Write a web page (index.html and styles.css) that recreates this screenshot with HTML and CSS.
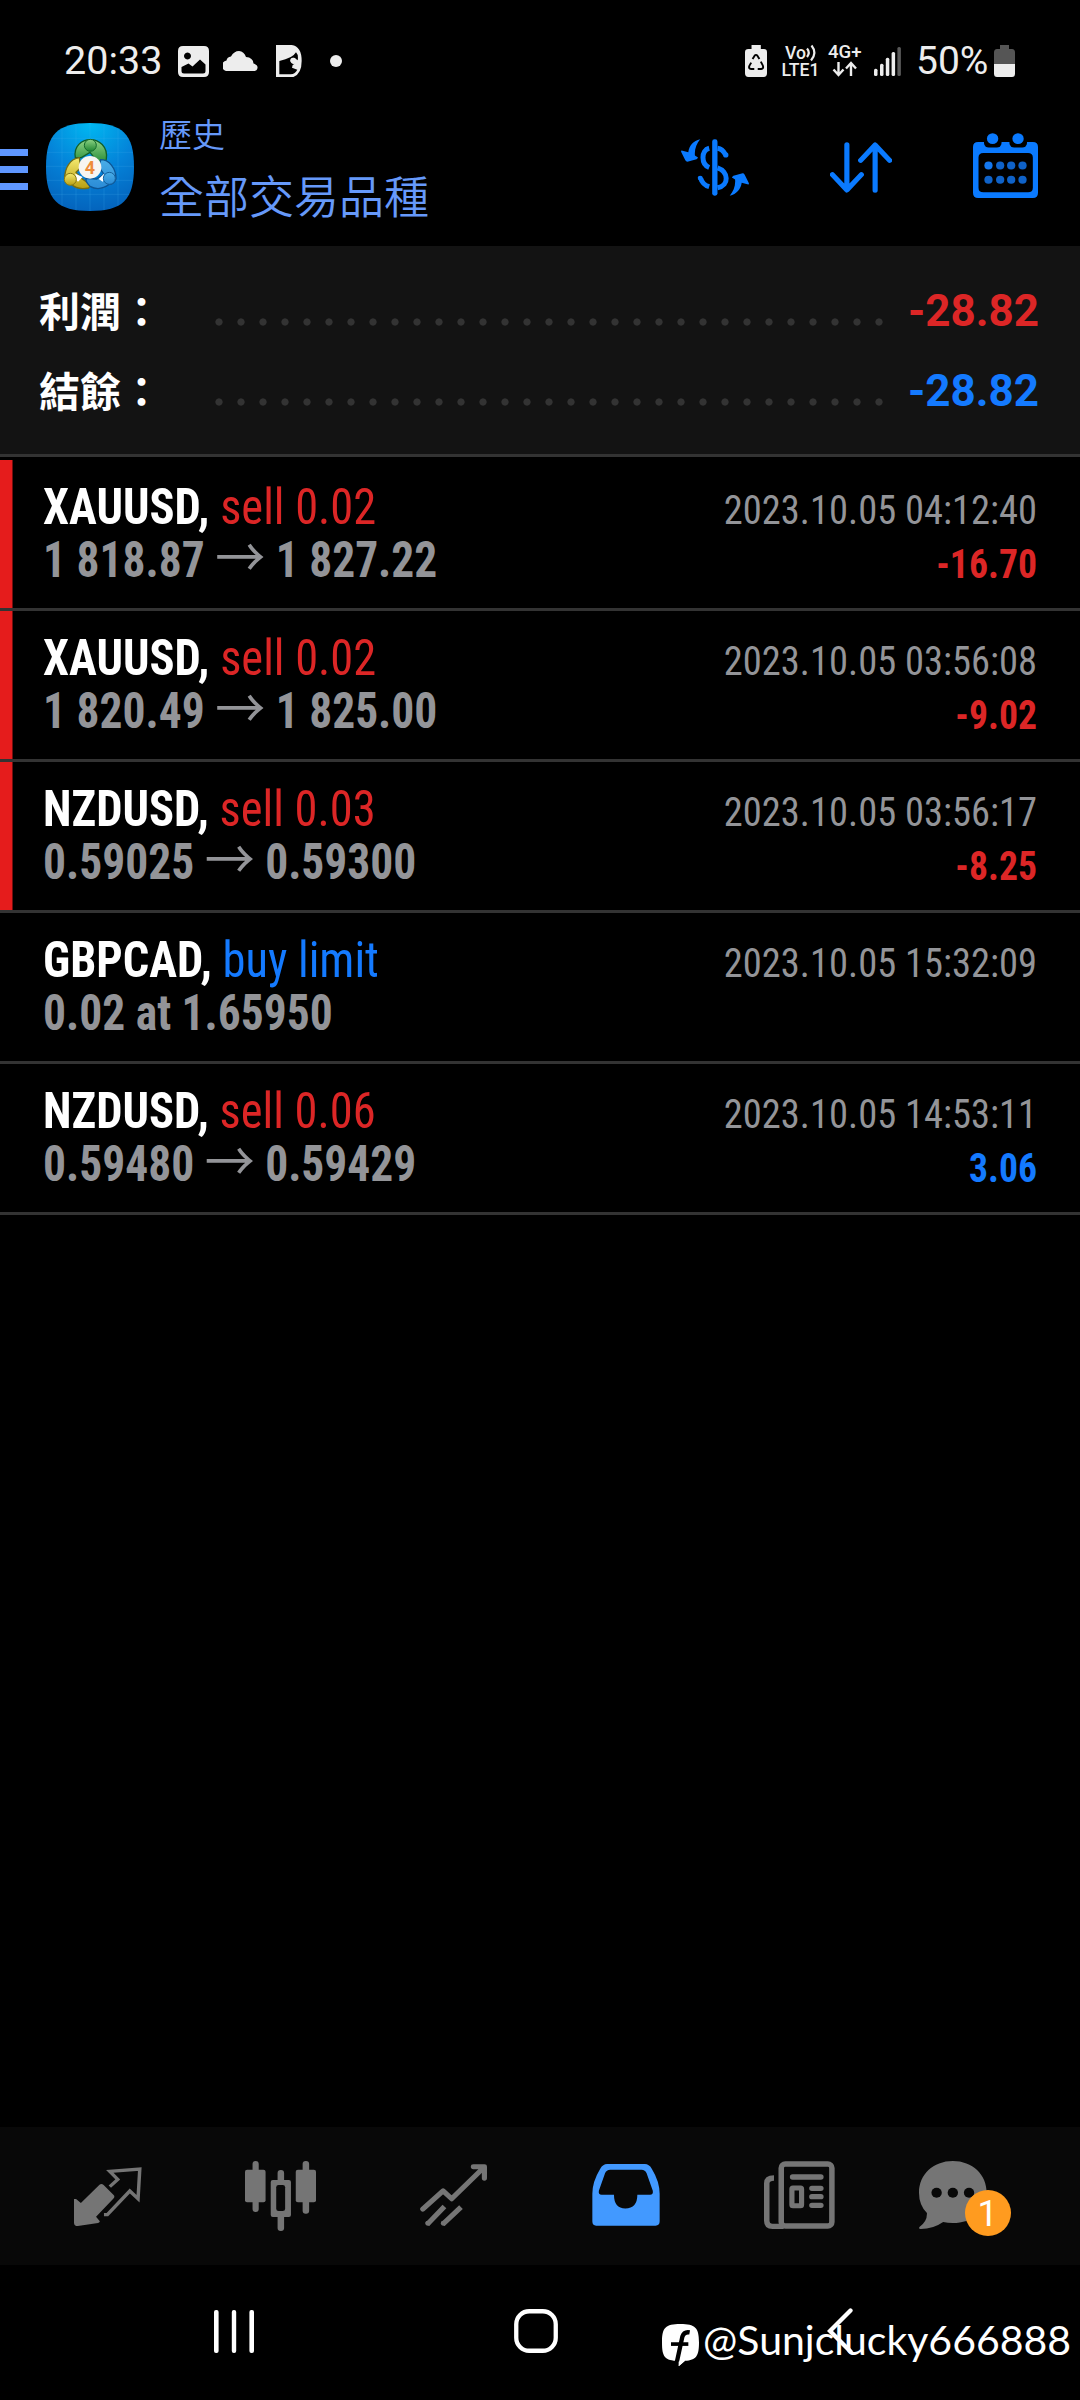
FILE: index.html
```html
<!DOCTYPE html>
<html lang="zh-Hant">
<head>
<meta charset="utf-8">
<title>歷史</title>
<link rel="stylesheet" href="styles.css">
</head>
<body>
<div class="screen">
  <div class="status">
    <span class="clock">20:33</span>
    <svg class="st-photo" viewBox="0 0 31 31"><path fill="#ededed" fill-rule="evenodd" d="M5 0H26Q31 0 31 5V26Q31 31 26 31H5Q0 31 0 26V5Q0 0 5 0ZM9.500 6.500a3.500 3.500 0 1 0 .01 0ZM3.500 21V25Q3.500 27.500 6 27.500H25Q27.500 27.500 27.500 25V18.500L22 13.500L14.500 20.500L10.500 17.500Z"/></svg>
    <svg class="st-cloud" viewBox="0 0 35 20"><path fill="#ededed" d="M5 20A5 5 0 0 1 3.500 9.500Q4 6 8 5.500Q11 0 16 0Q21 .5 23 6Q30 6.500 30.500 12.500Q35 14 34.500 17Q34 20 30.500 20Z"/></svg>
    <svg class="st-d" viewBox="48 30 78 98"><path fill="#ededed" fill-rule="evenodd" d="M48 30H95Q125 34 125 78Q125 122 93 128H48ZM58 78V118H92Q106 116 112 104L96 98L98 90L104 86A9 9 0 1 1 108 72L113 76Q116 60 108 52Q98 70 58 78Z"/><circle cx="99" cy="76" r="8" fill="#ededed"/></svg>
    <span class="st-dot"></span>
    <svg class="st-recycle" viewBox="595 75 64 96" preserveAspectRatio="none"><path fill="#ededed" d="M614 75H641V87H650Q659 87 659 97V160Q659 171 649 171H605Q595 171 595 160V97Q595 87 605 87H614Z"/><path fill="none" stroke="#000" stroke-width="5.500" stroke-linejoin="round" d="M617 117L623 107Q627 102 631 107L637 117M641 125L647 137Q650 146 642 147H632M622 147H613Q604 146 608 137L613 128"/></svg>
    <svg class="st-net" viewBox="782 44 80 36">
      <g fill="#ededed" font-family="Roboto, sans-serif" font-weight="500">
        <text x="785" y="59.500" font-size="18" textLength="21" lengthAdjust="spacingAndGlyphs">Vo</text>
        <text x="781.500" y="76.500" font-size="17.500" textLength="38" lengthAdjust="spacingAndGlyphs">LTE1</text>
        <text x="828" y="59" font-size="18" textLength="33.500" lengthAdjust="spacingAndGlyphs">4G+</text>
      </g>
      <path fill="none" stroke="#ededed" stroke-width="2.200" d="M807 49.500Q810.500 53.500 807 58M811.500 46.500Q817.500 54 811 61.500"/>
      <path fill="none" stroke="#ededed" stroke-width="2.400" d="M838.500 63V75.500M833.500 70.500L838.500 76L843.500 70.500M851 77V64.500M846 69.500L851 64L856 69.500"/>
    </svg>
    <svg class="st-signal" viewBox="874 46 27 29"><g fill="#ededed"><rect x="874" y="67.700" width="3.500" height="7.300" rx="1.500"/><rect x="880" y="62.700" width="3.500" height="12.300" rx="1.500"/><rect x="885.800" y="56.700" width="3.500" height="18.300" rx="1.500"/><rect x="891.600" y="51" width="3.500" height="24" rx="1.500"/><rect x="897.400" y="46" width="3.500" height="29" rx="1.500" fill="#595959"/></g></svg>
    <span class="pct">50%</span>
    <svg class="st-batt" viewBox="0 0 21 32"><path fill="#555" d="M6 0H15V4H18Q21 4 21 7.500V19H0V7.500Q0 4 3 4H6Z"/><path fill="#ededed" d="M0 19H21V28.500Q21 32 18 32H3Q0 32 0 28.500Z"/></svg>
  </div>

  <div class="header">
    <div class="menu"><i></i><i></i><i></i></div>
    <svg class="app" viewBox="48 38 264 264">
      <defs>
        <radialGradient id="bg" cx=".5" cy="0" r="1"><stop offset="0" stop-color="#00b9f2"/><stop offset=".55" stop-color="#0482d8"/><stop offset="1" stop-color="#0464bd"/></radialGradient>
        <linearGradient id="gr" x1="0" y1="0" x2="0" y2="1"><stop offset="0" stop-color="#8fd486"/><stop offset="1" stop-color="#1d8530"/></linearGradient>
        <linearGradient id="ye" x1="0" y1="0" x2="0" y2="1"><stop offset="0" stop-color="#f4ea70"/><stop offset="1" stop-color="#b89f12"/></linearGradient>
        <linearGradient id="bl" x1="0" y1="0" x2="0" y2="1"><stop offset="0" stop-color="#4aaee8"/><stop offset="1" stop-color="#2a8bd6"/></linearGradient>
      </defs>
      <path fill="url(#bg)" d="M180 38C278 38 312 72 312 170S278 302 180 302S48 268 48 170S82 38 180 38Z"/>
      <path stroke="#4cb4ee" stroke-opacity=".3" stroke-width="2" d="M96 56V286M138 42V300M180 39V301M222 42V300M264 56V286M64 84H296M52 126H308M49 168H311M51 210H308M62 252H298"/>
      <path fill="url(#gr)" stroke="#12602a" stroke-width="4" d="M136 142C130 108 155 88 181 88S234 108 229 146Q226 163 210 164L180 126L154 142Z"/>
      <path fill="url(#ye)" stroke="#746c14" stroke-width="4" d="M148 142C120 146 104 172 104 205Q110 222 124 222Q142 240 176 233L182 224L154 204L138 186L152 172Z"/>
      <path fill="url(#bl)" stroke="#0d5594" stroke-width="4" d="M212 148C238 148 258 174 258 205Q252 222 238 222Q208 244 180 228Q166 214 168 204L200 206L222 192L208 172Z"/>
      <path fill="#fff" d="M136 190L158 200L144 214L136 206ZM222 190L206 206L218 214L226 204Z"/>
      <circle cx="181" cy="105" r="18" fill="url(#gr)" stroke="#146a2c" stroke-width="3"/>
      <circle cx="121" cy="207" r="18" fill="url(#ye)" stroke="#857914" stroke-width="3"/>
      <circle cx="238" cy="204" r="18" fill="url(#bl)" stroke="#14609e" stroke-width="3"/>
      <circle cx="180" cy="171" r="34" fill="#f7f5f2"/>
      <text x="180" y="190" text-anchor="middle" font-family="Roboto, sans-serif" font-weight="700" font-size="54" fill="#ee8c3a">4</text>
    </svg>
    <div class="titles"><div class="sub">歷史</div><div class="title">全部交易品種</div></div>
    <svg class="ic-dollar" viewBox="33 41 205 170">
      <path id="turn" fill="#0a7aff" d="M91 41C70 46 58 60 55 80L35 75Q32 76 34 80L46 104Q49 110 55 108L80 101Q87 96 82 94L75 90C73 72 80 54 91 41Z"/>
      <use href="#turn" transform="rotate(180 135.500 126)"/>
      <rect x="127" y="41" width="16" height="170" rx="7" fill="#0a7aff"/>
      <path fill="none" stroke="#0a7aff" stroke-width="15" d="M118 68C93 74 93 116 118 126M143 127C176 138 180 180 143 187M143 68Q158 70 167 87M92 158Q98 178 118 184"/>
      <circle cx="168" cy="88" r="8" fill="#0a7aff"/><circle cx="91" cy="158" r="7.500" fill="#0a7aff"/>
    </svg>
    <svg class="ic-sort" viewBox="842 365 180 153" preserveAspectRatio="none"><path fill="none" stroke="#0a7aff" stroke-width="15" stroke-linecap="round" stroke-linejoin="round" d="M891 373V508M849 463L891 509L933 463M973 510V375M931 420L973 374L1015 420"/></svg>
    <svg class="ic-cal" viewBox="1257 339 189 196" preserveAspectRatio="none">
      <path fill="#0a7aff" fill-rule="evenodd" d="M1272 366H1431Q1446 366 1446 381V519Q1446 535 1431 535H1272Q1257 535 1257 519V381Q1257 366 1272 366ZM1287 399Q1273 399 1273 413V504Q1273 518 1287 518H1417Q1431 518 1431 504V413Q1431 399 1417 399Z"/>
      <rect x="1289" y="350" width="51" height="33" rx="14"/><rect x="1363" y="350" width="51" height="33" rx="14"/>
      <circle cx="1314" cy="356" r="16.500" fill="#0a7aff"/><circle cx="1388" cy="356" r="16.500" fill="#0a7aff"/>
      <g fill="#0f62c8"><circle cx="1302" cy="437" r="12" fill="#1478f0"/><circle cx="1336" cy="437" r="12"/><circle cx="1368" cy="437" r="12"/><circle cx="1401" cy="437" r="12"/><circle cx="1302" cy="480" r="12"/><circle cx="1336" cy="480" r="12"/><circle cx="1368" cy="480" r="12"/><circle cx="1401" cy="480" r="12"/></g>
    </svg>
  </div>

  <div class="summary">
    <div class="sum-row"><span class="label">利潤：</span><span class="leader"></span><span class="value red">-28.82</span></div>
    <div class="sum-row"><span class="label">結餘：</span><span class="leader"></span><span class="value blue">-28.82</span></div>
  </div>

  <div class="list">
    <div class="row loss"><div class="left"><div class="l1"><b>XAUUSD,</b> <span class="red">sell 0.02</span></div><div class="l2">1 818.87 <span class="arrow">→</span> 1 827.22</div></div><div class="right"><div class="time">2023.10.05 04:12:40</div><div class="profit red">-16.70</div></div></div>
    <div class="row loss"><div class="left"><div class="l1"><b>XAUUSD,</b> <span class="red">sell 0.02</span></div><div class="l2">1 820.49 <span class="arrow">→</span> 1 825.00</div></div><div class="right"><div class="time">2023.10.05 03:56:08</div><div class="profit red">-9.02</div></div></div>
    <div class="row loss"><div class="left"><div class="l1"><b>NZDUSD,</b> <span class="red">sell 0.03</span></div><div class="l2">0.59025 <span class="arrow">→</span> 0.59300</div></div><div class="right"><div class="time">2023.10.05 03:56:17</div><div class="profit red">-8.25</div></div></div>
    <div class="row"><div class="left"><div class="l1"><b>GBPCAD,</b> <span class="blue">buy limit</span></div><div class="l2">0.02 at 1.65950</div></div><div class="right"><div class="time">2023.10.05 15:32:09</div></div></div>
    <div class="row"><div class="left"><div class="l1"><b>NZDUSD,</b> <span class="red">sell 0.06</span></div><div class="l2">0.59480 <span class="arrow">→</span> 0.59429</div></div><div class="right"><div class="time">2023.10.05 14:53:11</div><div class="profit blue">3.06</div></div></div>
  </div>

  <div class="tabs">
    <div class="tab"><svg class="t1" viewBox="217 141 196 177" preserveAspectRatio="none"><path fill="none" stroke="#757575" stroke-width="10" d="M321 200L344 178L321 154L408 147L403 236L379 213L314 284H304"/><path fill="#757575" d="M291 194Q297 189 303 195L332 225Q337 230 331 236L281 290L292 304Q292 308 287 309L228 318Q217 318 217 308V237H223L237 249Z"/></svg></div>
    <div class="tab"><svg class="t2" viewBox="712 123 207 210" preserveAspectRatio="none"><g fill="#757575"><rect x="734" y="123" width="18" height="153" rx="9"/><rect x="712" y="149" width="60" height="98" rx="6"/><rect x="880" y="123" width="19" height="158" rx="9"/><rect x="860" y="149" width="59" height="98" rx="6"/><rect x="807" y="150" width="19" height="183" rx="9"/><rect x="787" y="180" width="59" height="111" rx="6"/></g><rect x="803" y="195" width="26" height="78" rx="7" fill="#080808"/></svg></div>
    <div class="tab"><svg class="t3" viewBox="1221 132 196 187" preserveAspectRatio="none"><g fill="none" stroke="#757575" stroke-width="15"><path stroke-linecap="round" stroke-linejoin="round" d="M1229 268L1288 213L1313 237L1404 145M1376 140H1408V175"/><path d="M1242 314L1292 260M1287 314L1340 262"/></g><circle cx="1244" cy="311" r="7.500" fill="#757575"/><circle cx="1289" cy="311" r="7.500" fill="#757575"/></svg></div>
    <div class="tab"><svg class="t4" viewBox="156 132 198 187" preserveAspectRatio="none"><path fill="#4299ff" fill-rule="evenodd" d="M200 132H310Q322 132 330 146Q353 185 353 222V305Q353 318 341 318H168Q157 318 157 305V222Q157 185 180 146Q188 132 200 132ZM209 149Q198 149 194 160L176 213Q174 225 184 225H220Q220 266 253 266Q288 266 288 225H325Q335 225 333 213L315 160Q311 149 300 149Z"/></svg></div>
    <div class="tab"><svg class="t5" viewBox="655 123 206 204" preserveAspectRatio="none"><g fill="none" stroke="#757575"><rect x="705" y="132" width="147" height="186" rx="12" stroke-width="16"/><path stroke-width="16" d="M684 174Q663 174 663 190V302Q663 319 680 319H712"/><rect x="736" y="204" width="28" height="53" rx="3" stroke-width="15"/><path stroke-width="16" stroke-linecap="round" d="M738 171H820M794 205H820M794 230H820M794 256H820"/></g></svg></div>
    <div class="tab"><div class="chat"><svg class="t6" viewBox="1107 123 197 204" preserveAspectRatio="none"><path fill="#757575" d="M1205 123C1262 123 1303 164 1303 218S1262 309 1205 309Q1190 309 1177 306Q1148 327 1112 327Q1104 326 1109 320Q1131 304 1130 279Q1107 255 1107 218C1107 164 1148 123 1205 123Z"/><g fill="#080808"><circle cx="1158" cy="218" r="15"/><circle cx="1205" cy="218" r="15"/><circle cx="1252" cy="218" r="15"/></g></svg><span class="badge">1</span></div></div>
  </div>

  <div class="nav">
    <svg class="n1" viewBox="0 0 40 43"><g fill="#fff"><rect width="4.600" height="43" rx="2"/><rect x="17.800" width="4.400" height="43" rx="2"/><rect x="35.400" width="4.600" height="43" rx="2"/></g></svg>
    <svg class="n2" viewBox="0 0 44 44"><rect x="2.250" y="2.250" width="39.500" height="39.500" rx="13" fill="none" stroke="#fff" stroke-width="4.300"/></svg>
    <svg class="n3" viewBox="0 0 26 46"><path fill="none" stroke="#fff" stroke-width="4.300" stroke-linecap="round" d="M23.500 2.500L3 23L23.500 43.500"/></svg>
    <div class="mark"><svg viewBox="38 62 111 127"><path fill="#fff" d="M93 62C138 62 149 73 149 117C149 157 141 170 107 172L88 188V172C46 172 38 160 38 117C38 73 48 62 93 62Z"/><path fill="none" stroke="#000" stroke-width="13" d="M121 87Q104 84 99 100L83 174"/><path stroke="#000" stroke-width="11" d="M65 122H117"/><path fill="#fff" d="M91 172H107L88 189Z"/></svg><span>@Sunjclucky666888</span></div>
  </div>
</div>
</body>
</html>
```
FILE: styles.css
```css
* { box-sizing: border-box; }
body { margin: 0; background: #000; }
svg { display: block; flex: none; }
.screen {
  width: 1080px; height: 2400px; display: flex; flex-direction: column;
  background: #000; color: #fff; overflow: hidden;
  font-family: Roboto, "Noto Sans CJK TC", sans-serif;
}
.red { color: #dc2626; }
.blue { color: #147aff; }

/* system status bar */
.status { height: 112px; padding: 10px 65px 0 64px; display: flex; align-items: center; color: #ededed; line-height: 50px; }
.clock { font-size: 39.500px; width: 98px; white-space: nowrap; }
.st-photo { width: 31px; height: 31px; margin-left: 16px; }
.st-cloud { width: 35px; height: 20px; margin-left: 14px; }
.st-d { width: 26px; height: 32.700px; margin-left: 18px; }
.st-dot { width: 12px; height: 12px; border-radius: 50%; background: #ededed; margin-left: 28px; }
.st-recycle { width: 22px; height: 32px; margin-left: auto; }
.st-net { width: 80px; height: 36px; margin-left: 15px; }
.st-signal { width: 27px; height: 29px; margin-left: 12px; }
.pct { font-size: 39px; width: 72px; margin-left: 15px; white-space: nowrap; }
.st-batt { width: 21px; height: 32px; margin-left: 6px; }

/* app header */
.header { height: 134px; display: flex; align-items: flex-start; padding-right: 42px; }
.menu { width: 28px; margin-top: 36.500px; display: flex; flex-direction: column; gap: 9.500px; }
.menu i { height: 7.500px; background: #5f97ff; }
.app { width: 88px; height: 88px; margin: 11px 0 0 18px; }
.titles { margin-left: 25px; color: #6699fa; font-family: "Noto Sans CJK TC", sans-serif; font-weight: 350; }
.sub { font-size: 33px; line-height: 40px; margin-top: 1px; }
.title { font-size: 45px; line-height: 50px; margin-top: 17px; }
.ic-dollar { width: 68px; height: 57px; margin: 27px 0 0 auto; }
.ic-sort { width: 62px; height: 51px; margin: 30px 0 0 81px; }
.ic-cal { width: 65px; height: 65px; margin: 21px 0 0 81px; }

/* totals */
.summary { height: 211px; background: #131313; border-bottom: 3px solid #333; padding: 25px 41px 0 39px; }
.sum-row { display: flex; height: 80px; align-items: center; line-height: 80px; }
.label { width: 169px; font: 700 41px/76px "Noto Sans CJK TC", sans-serif; height: 80px; white-space: nowrap; }
.leader { width: 682px; height: 22px; margin-top: 22px; background: radial-gradient(circle at 11px 11px, #333 3.200px, transparent 4px) 0 0 / 22px 22px repeat-x; }
.value { flex: 1; text-align: right; font-size: 44px; font-weight: 700; }

/* deals */
.list { margin-top: 3px; }
.row { height: 151px; border-bottom: 3px solid #333; padding: 21px 43px 0 43px; display: flex; justify-content: space-between; }
.loss { background: linear-gradient(#e51c1c, #e51c1c) 0 0 / 12.500px 100% no-repeat; }
.l1, .l2, .time, .profit { font-stretch: 75%; line-height: 54px; white-space: pre; }
.l1 { font-size: 46.500px; transform: scaleY(1.075); transform-origin: 0 43px; }
.l2 { font-size: 45.500px; height: 54px; font-weight: 700; color: #939498; transform: scaleY(1.1); transform-origin: 0 42.500px; }
.arrow { font: 400 50px/0 "Noto Sans CJK TC", sans-serif; }
.right { padding-top: 3px; text-align: right; }
.time { font-size: 38.500px; color: #939498; transform: scaleY(1.04); transform-origin: 0 40px; }
.profit { font-size: 37.700px; font-weight: 700; transform: scaleY(1.06); transform-origin: 0 40px; }

/* bottom tabs */
.tabs { margin-top: auto; height: 138px; background: #080808; display: flex; padding: 0 21.500px; }
.tab { flex: 1; display: flex; justify-content: center; align-items: flex-start; }
.t1 { width: 67.500px; height: 59px; margin-top: 40px; }
.t2 { width: 71px; height: 70px; margin-top: 34px; }
.t3 { width: 67.500px; height: 62px; margin-top: 37px; }
.t4 { width: 68px; height: 62px; margin-top: 37px; }
.t5 { width: 71px; height: 68px; margin-top: 34px; }
.chat { position: relative; margin: 34px 39px 0 0; }
.t6 { width: 68px; height: 68px; }
.badge { position: absolute; left: 46px; top: 29px; width: 46px; height: 46px; border-radius: 50%; background: #ff9b1f; color: #fff; font-size: 36px; line-height: 49px; text-align: center; }

/* system navigation */
.nav { position: relative; height: 135px; display: flex; align-items: flex-start; padding: 44px 0 0 214px; }
.n1 { width: 40px; height: 43px; margin-top: 1px; }
.n2 { width: 44px; height: 44px; margin-left: 260px; }
.n3 { width: 26px; height: 46px; margin: -1px 0 0 269px; }
.mark { position: absolute; left: 662px; top: 45px; display: flex; align-items: center; }
.mark svg { width: 37px; height: 42.500px; margin-top: 10px; }
.mark span { font: 400 41px/60px Lato, sans-serif; margin-left: 4px; white-space: nowrap; }
```
